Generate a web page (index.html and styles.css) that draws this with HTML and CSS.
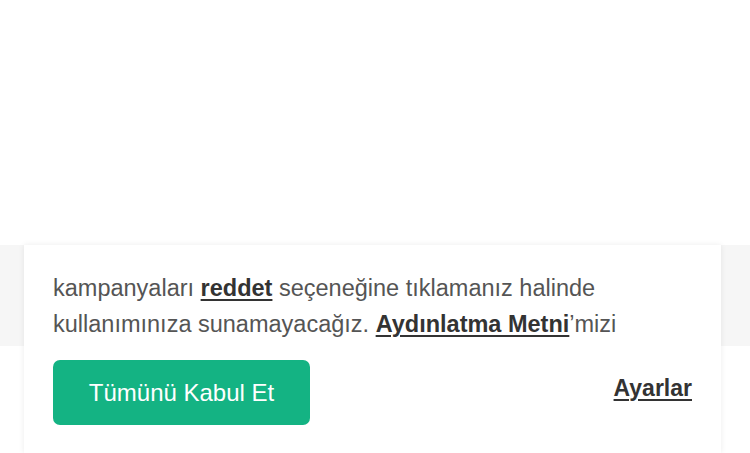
FILE: index.html
```html
<!DOCTYPE html>
<html lang="tr">
<head>
<meta charset="utf-8">
<link rel="stylesheet" href="styles.css">
</head>
<body>
  <div class="top"></div>
  <div class="band">
    <div class="card">
      <p class="text">kampanyaları <a class="link" href="#">reddet</a> seçeneğine tıklamanız halinde kullanımınıza sunamayacağız. <a class="link" href="#">Aydınlatma Metni</a>’mizi</p>
      <div class="actions">
        <button class="accept">Tümünü Kabul Et</button>
        <a class="settings" href="#">Ayarlar</a>
      </div>
    </div>
  </div>
</body>
</html>
```

FILE: styles.css
```css
html, body {
  margin: 0;
  padding: 0;
  background: #ffffff;
  width: 750px;
  height: 453px;
  overflow: hidden;
  font-family: "Liberation Sans", Arial, sans-serif;
}
.top {
  height: 245px;
  background: #ffffff;
}
.band {
  height: 101px;
  background: #f6f6f6;
  padding: 0 29px 0 24px;
}
.card {
  box-sizing: border-box;
  background: #ffffff;
  height: 208px;
  box-shadow: 0 0 6px rgba(0,0,0,0.08);
  padding: 25px 29px 0 29px;
}
.text {
  margin: 0;
  width: 600px;
  font-size: 23.5px;
  line-height: 36px;
  color: #555555;
}
.link {
  color: #333333;
  font-weight: bold;
  text-decoration: underline;
  text-underline-offset: 3px;
  text-decoration-thickness: 2px;
}
.actions {
  margin-top: 18px;
  display: flex;
  justify-content: space-between;
  align-items: center;
}
.accept {
  width: 257px;
  height: 65px;
  border: none;
  border-radius: 7px;
  background: #14b383;
  color: #ffffff;
  font-family: "Liberation Sans", Arial, sans-serif;
  font-size: 24px;
  padding: 0;
}
.settings {
  color: #333333;
  font-size: 23px;
  font-weight: bold;
  text-decoration: underline;
  text-underline-offset: 3px;
  text-decoration-thickness: 2px;
  margin-bottom: 8px;
}
```
